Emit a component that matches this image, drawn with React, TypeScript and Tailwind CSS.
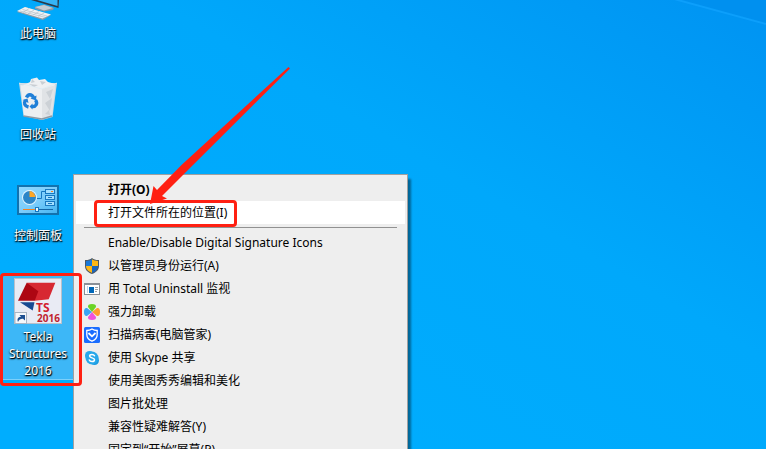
import React from "react";

interface DesktopIconProps {
  label: string;
  selected?: boolean;
  children: React.ReactNode;
}

interface MenuEntry {
  label: string;
  icon?: React.ReactNode;
  bold?: boolean;
  active?: boolean;
}

const ComputerIcon = () => (
  <svg className="h-[21px] w-12" viewBox="0 0 48 21" aria-hidden="true">
    <path d="M17 0 L44.500 8 L45 0 Z" fill="#2b3a48" />
    <path d="M23 0 L43.500 6 L43.500 0 Z" fill="#35b4f5" />
    <path d="M21 7 L30 4.500 L40 8 L39 10 L30 11.500 L21 9 Z" fill="#8b98a3" />
    <path d="M21 7 L30 5 L39 8 L30 10.500 Z" fill="#c3ccd3" />
    <path d="M3 12 L11 7 L37 15 L29 20 Z" fill="#8f9ba5" />
    <path d="M3 11 L11 7 L37 14.500 L28.500 18.500 Z" fill="#eef2f5" />
    <path
      d="M6 11 L31 17.300 M8.500 9.500 L33.500 16.200 M9 12.500 L15 8.500 M14 13.800 L20 10 M19 15 L25 11.500 M24 16.400 L30 13"
      stroke="#b4bec6"
      strokeWidth="0.7"
    />
  </svg>
);

const RecycleIcon = () => (
  <svg className="size-12" viewBox="0 0 48 48" aria-hidden="true">
    <path d="M5 9 L43 9 L38.500 43 L28 46 L9.500 42 Z" fill="#c9d8e3" />
    <path d="M8 12 L16 8 L17 5 L23 3.500 L25 6 L31 5 L34 8 L41 10 L38 18 L10 18 Z" fill="#eef0f2" />
    <path d="M18 5 L21 8 L17 9 Z M26 7 L28 11 L32 8 Z M15 10 L20 13 L24 11 Z" fill="#c9ced3" />
    <path d="M6.500 11 L28 15 L28 45 L10 42 Z" fill="#edeff1" />
    <path d="M28 15 L41.500 11 L38 42 L28 45 Z" fill="#e0e3e6" />
    <path d="M32 18 L39 15 L36 25 Z M31 29 L38 24 L36 37 Z M31 40 L35 36 L36 41 Z" fill="#ccd1d6" />
    <path d="M5 9 L28 15 L43 9" fill="none" stroke="#dbe9f2" strokeWidth="0.7" />
    <path d="M9.500 42 L28 45 L38 42" fill="none" stroke="#8d9aa5" strokeWidth="1.500" />
    <g fill="none" stroke="#1f7fd8" strokeWidth="3.400">
      <path d="M12.500 23.500 C14 20 17.500 19.500 19.500 23.500" />
      <path d="M21.500 26 C24 29.500 22 33 18 32.500" />
      <path d="M14.500 33 C10.500 32 9.500 29 11.500 26.500" />
    </g>
    <g fill="#1f7fd8">
      <path d="M16.500 24.500 L22.500 21.500 L22 26.500 Z" />
      <path d="M18.500 29.500 L18.500 35.500 L15.500 32.500 Z" />
      <path d="M8.500 26 L13.500 24.500 L14.500 29 Z" />
    </g>
  </svg>
);

const ControlPanelIcon = () => (
  <svg className="size-12" viewBox="0 0 48 48" aria-hidden="true">
    <defs>
      <linearGradient id="panel" x1="0" y1="0" x2="1" y2="1">
        <stop offset="0" stopColor="#8fd8ff" />
        <stop offset="0.5" stopColor="#7ccdfb" />
        <stop offset="1" stopColor="#45b5f2" />
      </linearGradient>
    </defs>
    <rect x="3" y="10" width="42" height="30" fill="#1272ae" />
    <rect x="5" y="12" width="38" height="26" fill="url(#panel)" />
    <circle cx="15.500" cy="22.500" r="7.500" fill="#e2f5ff" />
    <circle cx="15.500" cy="22.500" r="6.500" fill="#2b86c8" />
    <path d="M15.500 22 V16 A6.500 6.500 0 0 1 21.500 22 Z" fill="#ffa726" />
    <path d="M23 23.500 H27.500 V16.500 H31" fill="none" stroke="#1878c0" />
    <g fill="#a5e0ff" stroke="#1878c0">
      <rect x="31.500" y="14.500" width="9" height="4" />
      <rect x="31.500" y="20.500" width="9" height="4" />
      <rect x="31.500" y="26.500" width="9" height="4" />
    </g>
    <path d="M37 16.500 H39" stroke="#f58220" />
    <path d="M34 22.500 H38 M34 28.500 H38" stroke="#1878c0" />
    <path d="M9 34.500 H21" stroke="#f58220" />
    <path d="M25 34.500 H39" stroke="#1265a5" />
    <rect x="21.500" y="32.500" width="3" height="4" fill="#e8f8ff" stroke="#1878c0" />
  </svg>
);

const TeklaIcon = () => (
  <svg className="size-12" viewBox="0 0 48 48" aria-hidden="true">
    <rect x="0" y="2" width="48" height="46" fill="#b9c0cb" />
    <rect x="1" y="3" width="46" height="44" fill="#e9ebf4" />
    <path d="M12.700 6.700 L41.300 6.700 L34.700 23.300 L20.700 24.700 L18 15 Z" fill="#d72832" />
    <path d="M12.700 6.700 L24.300 15.300 L20.700 24.700 L4 24.700 Z" fill="#ad0613" />
    <path d="M6 26.300 L20.500 26.300 L18.700 34.500 Z" fill="#164a92" />
    <text x="22" y="36" fontSize="12" fontWeight="700" fill="#d3202e" fontFamily="Open Sans, sans-serif">
      TS
    </text>
    <text x="23" y="46" fontSize="10" fontWeight="700" fill="#c01f30" fontFamily="Open Sans, sans-serif">
      2016
    </text>
    <rect x="1" y="36.500" width="11.500" height="11" fill="#f6f8fb" stroke="#a9b4c2" />
    <path d="M4 46 C2.500 42 5 40.500 7 41 L5.500 39 H11 V44.500 L9 42.800 C7 42.500 5 43.500 4 46 Z" fill="#1d4f92" />
  </svg>
);

const ShieldIcon = () => (
  <svg className="size-4" viewBox="0 0 16 16" aria-hidden="true">
    <path d="M8 0 C10 1.700 12.500 2.200 15 2 V8 C15 12 12 14.500 8 16 C4 14.500 1 12 1 8 V2 C3.500 2.200 6 1.700 8 0 Z" fill="#4d5863" />
    <path d="M8 1.300 V8 H2 V3 C4.500 3 6.500 2.400 8 1.300 Z" fill="#1a78d6" />
    <path d="M8 1.300 C9.500 2.400 11.500 3 14 3 V8 H8 Z" fill="#fdb714" />
    <path d="M2 8 H8 V14.900 C4.500 13.500 2 11.300 2 8 Z" fill="#fdb714" />
    <path d="M14 8 H8 V14.900 C11.500 13.500 14 11.300 14 8 Z" fill="#1a66bd" />
  </svg>
);

const UninstallIcon = () => (
  <svg className="size-4" viewBox="0 0 16 16" aria-hidden="true">
    <rect x="0.500" y="2.500" width="15" height="11" fill="#fff" stroke="#8a8f96" />
    <path d="M0 3 H16" stroke="#8a8f96" strokeWidth="2" />
    <rect x="3" y="5" width="1" height="7" fill="#b8d4ea" />
    <rect x="5" y="6" width="5" height="6" fill="#0067b8" />
    <path d="M11 6.500 H14 M11 8.500 H14 M11 10.500 H13" stroke="#9aa0a6" />
  </svg>
);

const CloverIcon = () => (
  <svg className="size-4" viewBox="0 0 16 16" aria-hidden="true">
    <path d="M8 8 L4 3 Q3.500 0 8 0 Q12.500 0 12 3 Z" fill="#6bd425" />
    <path d="M8 8 L13 4 Q16 3.500 16 8 Q16 12.500 13 12 Z" fill="#ff9d2e" />
    <path d="M8 8 L12 13 Q12.500 16 8 16 Q3.500 16 4 13 Z" fill="#f052dc" />
    <path d="M8 8 L3 12 Q0 12.500 0 8 Q0 3.500 3 4 Z" fill="#3ba3f5" />
  </svg>
);

const GuardIcon = () => (
  <svg className="size-4" viewBox="0 0 16 16" aria-hidden="true">
    <rect width="16" height="16" rx="1.500" fill="#1a6dff" />
    <path
      d="M8 2 C9.500 3 11.500 3.500 13.200 3.500 V7.500 C13.200 10.500 11 13 8 14.200 C5 13 2.800 10.500 2.800 7.500 V3.500 C4.500 3.500 6.500 3 8 2 Z"
      fill="none"
      stroke="#fff"
      strokeWidth="1.300"
    />
    <path d="M4.500 6 L8 9.300 L11.500 6" fill="none" stroke="#fff" strokeWidth="1.800" />
  </svg>
);

const SkypeIcon = () => (
  <svg className="size-4" viewBox="0 0 16 16" aria-hidden="true">
    <circle cx="5.500" cy="5.500" r="4.500" fill="#28a8ea" />
    <circle cx="10.500" cy="10.500" r="4.500" fill="#1c9be0" />
    <circle cx="8" cy="8" r="6.500" fill="#28a8ea" />
    <path
      d="M10.500 5.800 C10 4.700 8.900 4.400 8 4.400 C6.500 4.400 5.600 5.100 5.600 6.100 C5.600 8.400 10.500 7.300 10.500 9.800 C10.500 11 9.300 11.600 8 11.600 C6.800 11.600 5.700 11.100 5.300 10"
      fill="none"
      stroke="#fff"
      strokeWidth="1.500"
      strokeLinecap="round"
    />
  </svg>
);

const openEntries: MenuEntry[] = [
  { label: "打开(O)", bold: true },
  { label: "打开文件所在的位置(I)", active: true },
];

const toolEntries: MenuEntry[] = [
  { label: "Enable/Disable Digital Signature Icons" },
  { label: "以管理员身份运行(A)", icon: <ShieldIcon /> },
  { label: "用 Total Uninstall 监视", icon: <UninstallIcon /> },
  { label: "强力卸载", icon: <CloverIcon /> },
  { label: "扫描病毒(电脑管家)", icon: <GuardIcon /> },
  { label: "使用 Skype 共享", icon: <SkypeIcon /> },
  { label: "使用美图秀秀编辑和美化" },
  { label: "图片批处理" },
  { label: "兼容性疑难解答(Y)" },
  { label: "固定到“开始”屏幕(P)" },
];

const DesktopIcon: React.FC<DesktopIconProps> = ({ label, selected, children }) => (
  <button
    type="button"
    className={
      selected
        ? "relative flex w-full flex-col items-center gap-1 border-b border-[#7dd0fa] bg-[#3db7f7]"
        : "flex w-full flex-col items-center gap-1"
    }
  >
    {children}
    <span className="w-16 text-center leading-[17px] text-white [text-shadow:1px_1px_1px_#000,0_1px_2px_#000]">
      {label}
    </span>
    {selected && (
      <span className="absolute -top-[3px] -right-[6px] -bottom-[7px] left-0 z-20 rounded-sm border-3 border-[#ff2012]" />
    )}
  </button>
);

const MenuRow: React.FC<{ entry: MenuEntry }> = ({ entry }) => (
  <button
    type="button"
    role="menuitem"
    className={
      entry.active
        ? "relative flex h-[23px] w-full items-center gap-2 bg-white px-2"
        : "flex h-[23px] w-full items-center gap-2 px-2"
    }
  >
    <span className="size-4 shrink-0">{entry.icon}</span>
    <span className={entry.bold ? "font-bold" : ""}>{entry.label}</span>
    {entry.active && (
      <span className="absolute -top-px left-[18px] h-[27px] w-[143px] rounded-sm border-3 border-[#ff2012]" />
    )}
  </button>
);

export default function App() {
  return (
    <main className="relative h-screen overflow-hidden bg-linear-to-tr from-[#00adfe] from-20% via-[#00a8fb] via-60% to-[#0093f2] font-['Noto_Sans','Noto_Sans_CJK_SC',sans-serif] text-xs">
      <svg className="absolute top-0 right-0 h-[26px] w-24" viewBox="0 0 96 26" aria-hidden="true">
        <path d="M4 0 L96 25 V0 Z" fill="#008eec" fillOpacity="0.6" />
        <path d="M4 -1 L96 24" stroke="#0c9ffb" strokeWidth="2" />
      </svg>

      <div className="flex w-19 flex-col gap-8">
        <DesktopIcon label="此电脑">
          <ComputerIcon />
        </DesktopIcon>
        <DesktopIcon label="回收站">
          <RecycleIcon />
        </DesktopIcon>
        <DesktopIcon label="控制面板">
          <ControlPanelIcon />
        </DesktopIcon>
        <DesktopIcon label="Tekla Structures 2016" selected>
          <TeklaIcon />
        </DesktopIcon>
      </div>

      <div
        role="menu"
        className="absolute top-[174px] left-[73px] z-10 w-[335px] border border-[#a0a0a0] bg-[#eeeeee] px-0.5 py-[3px] text-black shadow-[3px_5px_2px_rgba(0,0,0,0.4)]"
      >
        {openEntries.map((entry) => (
          <MenuRow key={entry.label} entry={entry} />
        ))}
        <hr className="mx-2 my-[3px] border-[#919191]" />
        {toolEntries.map((entry) => (
          <MenuRow key={entry.label} entry={entry} />
        ))}
      </div>

      <svg
        className="absolute top-[66px] left-[148px] z-20 h-[138px] w-36"
        viewBox="148 66 144 138"
        aria-hidden="true"
      >
        <path d="M288.500 67 L290 68.500 L193 165 L162 196 L167 198.500 L150 204 L153.500 186 L157 190 L181.500 165 Z" fill="#ff2012" />
      </svg>
    </main>
  );
}
